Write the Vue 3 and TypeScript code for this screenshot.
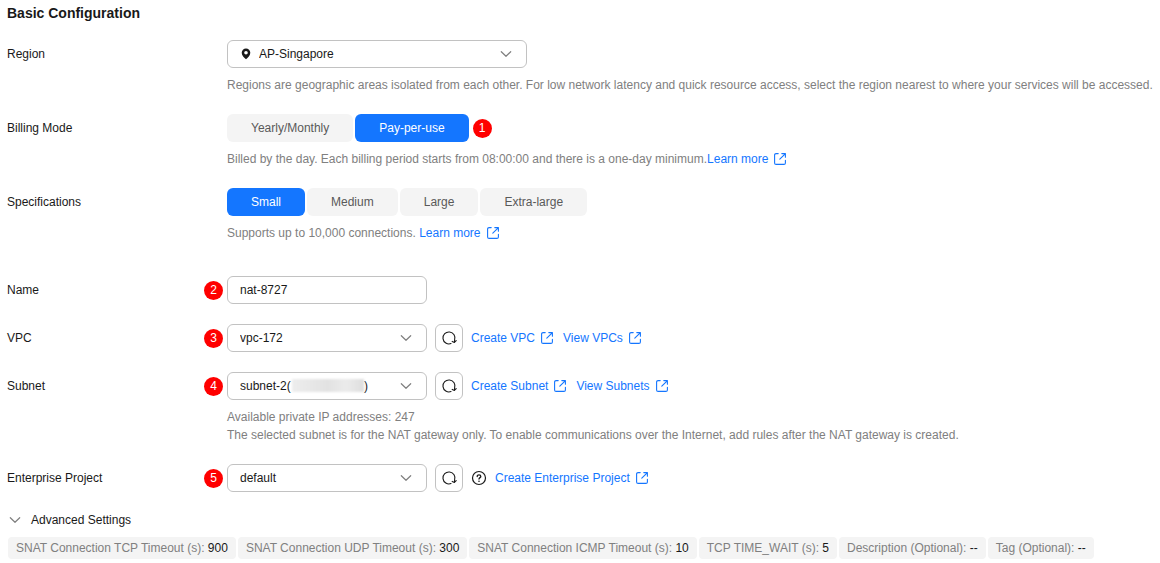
<script setup lang="ts">
import { defineComponent, h, ref } from 'vue'

const region = ref('AP-Singapore')
const billing = ref('Pay-per-use')
const spec = ref('Small')
const name = ref('nat-8727')
const billingModes: string[] = ['Yearly/Monthly', 'Pay-per-use']
const specs: string[] = ['Small', 'Medium', 'Large', 'Extra-large']
const hiddenRange = '\u00a0'.repeat(22)

const settings: { label: string; value: string }[] = [
  { label: 'SNAT Connection TCP Timeout (s):', value: '900' },
  { label: 'SNAT Connection UDP Timeout (s):', value: '300' },
  { label: 'SNAT Connection ICMP Timeout (s):', value: '10' },
  { label: 'TCP TIME_WAIT (s):', value: '5' },
  { label: 'Description (Optional):', value: '--' },
  { label: 'Tag (Optional):', value: '--' },
]

const stroke = { fill: 'none', stroke: 'currentColor', 'stroke-linecap': 'round', 'stroke-linejoin': 'round' }

const Chevron = defineComponent({
  render: () =>
    h('svg', { width: 12, height: 12, viewBox: '0 0 12 12', 'aria-hidden': 'true' }, [
      h('path', { ...stroke, 'stroke-width': 1.2, d: 'M1.3 3.7 6 8.3l4.7-4.6' }),
    ]),
})

const External = defineComponent({
  render: () =>
    h('svg', { width: 12, height: 12, viewBox: '0 0 12 12', 'aria-hidden': 'true' }, [
      h('path', {
        ...stroke,
        'stroke-width': 1.1,
        d: 'M4.2.6H2.1Q.6.6.6 2.1v7.8q0 1.5 1.5 1.5h7.8q1.5 0 1.5-1.5V7.2M7.8.6h3.6v3.6M11.2.8 5.8 6.2',
      }),
    ]),
})

const Refresh = defineComponent({
  render: () =>
    h('svg', { width: 16, height: 16, viewBox: '0 0 16 16', 'aria-hidden': 'true' }, [
      h('path', {
        ...stroke,
        'stroke-width': 1.1,
        d: 'M10 13.6A6 6 0 1 1 13.6 10L13.4 12.4M11.2 11.4l2.2 1 1.8-1.8',
      }),
    ]),
})
</script>

<template>
  <main class="page">
    <h1 class="title">Basic Configuration</h1>

    <form class="form" @submit.prevent>
      <div class="row">
        <label class="label" for="region">Region</label>
        <div class="content">
          <div class="field wide">
            <svg class="pin" width="10" height="12" viewBox="0 0 10 12" aria-hidden="true">
              <path fill="currentColor" fill-rule="evenodd" d="M5 .5A4.300 4.300 0 0 0 .7 4.800c0 2.600 2.500 4.900 4.300 6.500 1.800-1.600 4.300-3.900 4.300-6.500A4.300 4.300 0 0 0 5 .5Zm0 2.500a1.800 1.800 0 1 1 0 3.600A1.800 1.800 0 0 1 5 3Z" />
            </svg>
            <select id="region" v-model="region" class="control with-icon">
              <option>AP-Singapore</option>
            </select>
            <Chevron class="chevron" />
          </div>
          <p class="help">Regions are geographic areas isolated from each other. For low network latency and quick resource access, select the region nearest to where your services will be accessed.</p>
        </div>
      </div>

      <div class="row">
        <span id="billing-label" class="label">Billing Mode</span>
        <div class="content">
          <div class="tabs" role="group" aria-labelledby="billing-label">
            <button v-for="m in billingModes" :key="m" type="button" class="tab" :class="{ active: billing === m }" :aria-pressed="billing === m" @click="billing = m">{{ m }}</button>
            <span class="step inline">1</span>
          </div>
          <p class="help">Billed by the day. Each billing period starts from 08:00:00 and there is a one-day minimum.<a href="#" class="link">Learn more<External /></a></p>
        </div>
      </div>

      <div class="row last-plan">
        <span id="spec-label" class="label">Specifications</span>
        <div class="content">
          <div class="tabs" role="group" aria-labelledby="spec-label">
            <button v-for="s in specs" :key="s" type="button" class="tab" :class="{ active: spec === s }" :aria-pressed="spec === s" @click="spec = s">{{ s }}</button>
          </div>
          <p class="help">Supports up to 10,000 connections. <a href="#" class="link">Learn more<External /></a></p>
        </div>
      </div>

      <div class="row">
        <label class="label" for="name">Name</label>
        <div class="content">
          <div class="field">
            <span class="step side">2</span>
            <input id="name" v-model="name" class="control" type="text" />
          </div>
        </div>
      </div>

      <div class="row">
        <label class="label" for="vpc">VPC</label>
        <div class="content">
          <div class="line">
            <div class="field">
              <span class="step side">3</span>
              <select id="vpc" class="control"><option>vpc-172</option></select>
              <Chevron class="chevron" />
            </div>
            <button type="button" class="refresh" aria-label="Refresh VPCs"><Refresh /></button>
            <div class="links">
              <a href="#" class="link">Create VPC<External /></a>
              <a href="#" class="link">View VPCs<External /></a>
            </div>
          </div>
        </div>
      </div>

      <div class="row">
        <label class="label" for="subnet">Subnet</label>
        <div class="content">
          <div class="line">
            <div class="field">
              <span class="step side">4</span>
              <select id="subnet" class="control"><option>subnet-2({{ hiddenRange }})</option></select>
              <span class="mask"></span>
              <Chevron class="chevron" />
            </div>
            <button type="button" class="refresh" aria-label="Refresh subnets"><Refresh /></button>
            <div class="links">
              <a href="#" class="link">Create Subnet<External /></a>
              <a href="#" class="link">View Subnets<External /></a>
            </div>
          </div>
          <div class="help">
            <div>Available private IP addresses: 247</div>
            <div>The selected subnet is for the NAT gateway only. To enable communications over the Internet, add rules after the NAT gateway is created.</div>
          </div>
        </div>
      </div>

      <div class="row">
        <label class="label" for="project">Enterprise Project</label>
        <div class="content">
          <div class="line">
            <div class="field">
              <span class="step side">5</span>
              <select id="project" class="control"><option>default</option></select>
              <Chevron class="chevron" />
            </div>
            <button type="button" class="refresh" aria-label="Refresh projects"><Refresh /></button>
            <button type="button" class="hint" aria-label="About enterprise projects">
              <svg width="16" height="16" viewBox="0 0 16 16" fill="none" stroke="currentColor" stroke-linecap="round" aria-hidden="true">
                <circle cx="8" cy="8" r="6.500" stroke-width="1.200" />
                <path d="M6.200 6.600c0-1.200.8-1.800 1.800-1.800s1.800.7 1.800 1.600c0 1.200-1.800 1.300-1.800 2.700" stroke-width="1.300" />
                <circle cx="8" cy="11.200" r=".8" fill="currentColor" stroke="none" />
              </svg>
            </button>
            <a href="#" class="link">Create Enterprise Project<External /></a>
          </div>
        </div>
      </div>
    </form>

    <button type="button" class="advanced" aria-expanded="false"><Chevron />Advanced Settings</button>
    <ul class="chips">
      <li v-for="s in settings" :key="s.label" class="chip">{{ s.label }} <span class="value">{{ s.value }}</span></li>
    </ul>
  </main>
</template>

<style>
body {
  background: #fff;
}
</style>

<style scoped>
.page,
.page * {
  box-sizing: border-box;
}
.page {
  padding: 4px 0 4px 7px;
  font-family: "Liberation Sans", Arial, sans-serif;
  font-size: 12px;
  line-height: 18px;
  color: #191919;
}
button,
input,
select {
  font: inherit;
  color: inherit;
  margin: 0;
}
.title {
  margin: 0 0 18px;
  font-size: 14px;
  line-height: 18px;
  font-weight: 700;
}
.form {
  display: flex;
  flex-direction: column;
  gap: 20px;
}
.row {
  display: grid;
  grid-template-columns: 220px minmax(0, 1fr);
}
.last-plan {
  margin-bottom: 14px;
}
.label {
  line-height: 28px;
}
.help {
  margin: 8px 0 0;
  color: #808080;
}
.line {
  display: flex;
  align-items: center;
  gap: 8px;
}
.field {
  position: relative;
  width: 200px;
}
.field.wide {
  width: 300px;
}
.control {
  display: block;
  width: 100%;
  height: 28px;
  padding: 0 32px 0 12px;
  border: 1px solid #c2c2c2;
  border-radius: 6px;
  background: #fff;
  appearance: none;
  outline: none;
}
.with-icon {
  padding-left: 31px;
}
.pin {
  position: absolute;
  left: 14px;
  top: 8px;
}
.chevron {
  position: absolute;
  right: 15px;
  top: 8px;
  pointer-events: none;
}
.chevron,
.advanced svg {
  color: #808080;
}
.mask {
  position: absolute;
  left: 65px;
  top: 7px;
  width: 72px;
  height: 13px;
  background: linear-gradient(90deg, #ededed, #e2e2e2 50%, #ebebeb 75%, #dedede);
  filter: blur(1px);
  pointer-events: none;
}
.step {
  width: 19px;
  height: 19px;
  border-radius: 50%;
  background: #f00;
  color: #fff;
  line-height: 19px;
  text-align: center;
}
.step.inline {
  margin-left: 2px;
}
.step.side {
  position: absolute;
  left: -23px;
  top: 5px;
}
.tabs {
  display: flex;
  align-items: center;
  gap: 2px;
}
.tab {
  height: 28px;
  padding: 0 24px;
  border: 0;
  border-radius: 6px;
  background: #f4f4f4;
  color: #595959;
}
.tab.active {
  background: #1476ff;
  color: #fff;
}
.link {
  display: inline-flex;
  align-items: center;
  gap: 6px;
  color: #1476ff;
  text-decoration: none;
  vertical-align: top;
}
.links {
  display: flex;
  gap: 10px;
}
.refresh {
  display: grid;
  place-items: center;
  width: 28px;
  height: 28px;
  padding: 0;
  border: 1px solid #c2c2c2;
  border-radius: 6px;
  background: #fff;
}
.hint {
  display: grid;
  padding: 0;
  border: 0;
  background: none;
}
.advanced {
  display: flex;
  align-items: center;
  gap: 10px;
  margin-top: 19px;
  padding: 0 2px;
  border: 0;
  background: none;
}
.chips {
  display: flex;
  flex-wrap: wrap;
  gap: 2px;
  margin: 8px 0 0;
  padding: 0 0 0 1px;
  list-style: none;
}
.chip {
  padding: 2px 8px;
  border-radius: 4px;
  background: #f4f4f4;
  color: #808080;
}
.value {
  color: #191919;
}
</style>
